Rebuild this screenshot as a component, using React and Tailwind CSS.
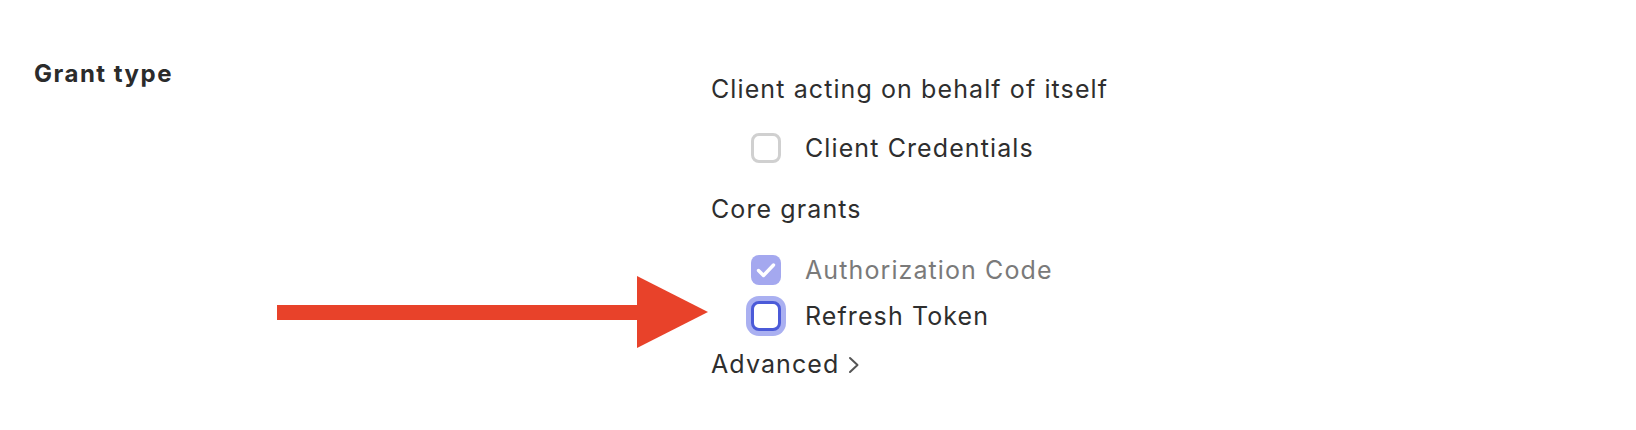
import React from "react";

function Box({ kind }) {
  if (kind === "checked") {
    return (
      <span className="block h-[30px] w-[30px] shrink-0 rounded-[8px] bg-[#a4a8ef]">
        <svg width="30" height="30" viewBox="0 0 30 30" fill="none">
          <path d="M7.5 15.5l5 5 10-10.5" stroke="#fff" strokeWidth="3.4" strokeLinecap="round" strokeLinejoin="round" />
        </svg>
      </span>
    );
  }
  if (kind === "focus") {
    return (
      <span className="block h-[30px] w-[30px] shrink-0 rounded-[8px] border-[3px] border-[#4b5ad8] bg-white ring-[5px] ring-[#aab0f1]" />
    );
  }
  return <span className="block h-[30px] w-[30px] shrink-0 rounded-[8px] border-[3px] border-[#d0d0d0] bg-white" />;
}

function Option({ kind, label, muted, className }) {
  return (
    <div className={"flex h-[30px] items-center pl-[40px] " + (className || "")}>
      <Box kind={kind} />
      <span className={"ml-[24px] text-[25px] leading-[30px] tracking-[1.1px] " + (muted ? "text-[#7a7a7a]" : "text-[#2e2e2e]")}>{label}</span>
    </div>
  );
}

export default function App() {
  return (
    <div className="relative h-[430px] w-[1636px] overflow-hidden bg-white font-['Inter',sans-serif] text-[#2e2e2e]">
      <div className="flex pl-[34px]">
        <div className="w-[677px] pt-[60px]">
          <h3 className="text-[24px] font-bold leading-[28px] tracking-[1.5px] text-[#2b2b2b]">Grant type</h3>
        </div>
        <div className="flex flex-col pt-[74px]">
          <div className="text-[25px] leading-[30px] tracking-[1.1px]">Client acting on behalf of itself</div>
          <Option kind="empty" label="Client Credentials" className="mt-[29px]" />
          <div className="mt-[31px] text-[25px] leading-[30px] tracking-[1.1px]">Core grants</div>
          <Option kind="checked" label="Authorization Code" muted className="mt-[31px]" />
          <Option kind="focus" label="Refresh Token" className="mt-[16px]" />
          <div className="mt-[18px] flex items-center text-[25px] leading-[30px] tracking-[1.1px]">
            <span>Advanced</span>
            <svg className="ml-[8px] mt-[2px]" width="14" height="20" viewBox="0 0 14 20" fill="none">
              <path d="M3 3l7.5 7-7.5 7" stroke="#555" strokeWidth="2" strokeLinecap="round" strokeLinejoin="round" />
            </svg>
          </div>
        </div>
      </div>
      <svg className="absolute left-0 top-0" width="1636" height="430" viewBox="0 0 1636 430">
        <rect x="277" y="305" width="362" height="15" fill="#e8422a" />
        <polygon points="637,276 708,312 637,348" fill="#e8422a" />
      </svg>
    </div>
  );
}
